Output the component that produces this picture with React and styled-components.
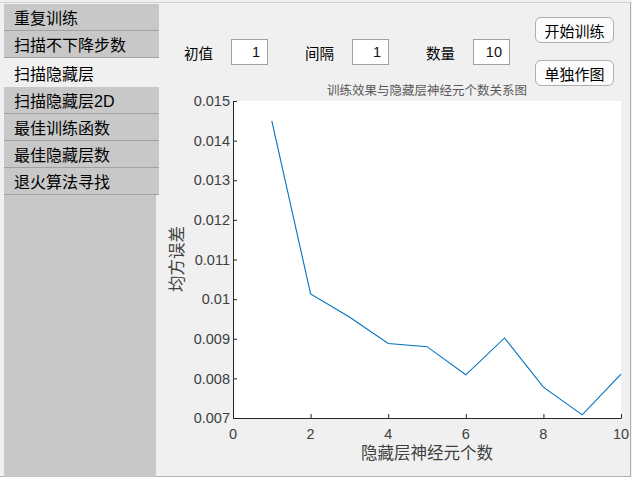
import React from "react";
import styled, { createGlobalStyle } from "styled-components";

const GlobalStyle = createGlobalStyle`
  html, body {
    margin: 0;
    padding: 0;
    background: #f0f0f0;
  }
  * {
    box-sizing: border-box;
  }
`;

const tabs = [
  "重复训练",
  "扫描不下降步数",
  "扫描隐藏层",
  "扫描隐藏层2D",
  "最佳训练函数",
  "最佳隐藏层数",
  "退火算法寻找",
];

const fields = [
  { label: "初值", value: "1" },
  { label: "间隔", value: "1" },
  { label: "数量", value: "10" },
];

const data = [0.0145, 0.01013, 0.00955, 0.00888, 0.0088, 0.00809, 0.00902, 0.00778, 0.00708, 0.00811];

// plot box inside the chart svg
const PL = 74;
const PR = 462;
const PT = 20;
const PB = 337;

const px = (x) => PL + (x / 10) * (PR - PL);
const py = (v) => PT + ((0.015 - v) / 0.008) * (PB - PT);

const yTicks = ["0.015", "0.014", "0.013", "0.012", "0.011", "0.01", "0.009", "0.008", "0.007"];
const xTicks = [0, 2, 4, 6, 8, 10];

const App = () => {
  const points = data.map((v, i) => `${px(i + 1)},${py(v)}`).join(" ");

  return (
    <>
      <GlobalStyle />
      <Window>
        <Frame>
          <Sidebar>
            {tabs.map((t, i) => (
              <Tab key={t} active={i === 2}>
                {t}
              </Tab>
            ))}
            <SidebarFill />
          </Sidebar>
          <Content>
            <Header>
              <Controls>
                {fields.map((f) => (
                  <Field key={f.label}>
                    <Label>{f.label}</Label>
                    <NumberBox>{f.value}</NumberBox>
                  </Field>
                ))}
              </Controls>
              <Buttons>
                <Button>开始训练</Button>
                <Button>单独作图</Button>
              </Buttons>
            </Header>
            <Chart width="471" height="396" viewBox="0 0 471 396">
              <rect x={PL} y={PT} width={PR - PL} height={PB - PT} fill="#ffffff" />
              <ChartTitle x="268" y="13.5" textAnchor="middle">
                训练效果与隐藏层神经元个数关系图
              </ChartTitle>
              <polyline points={points} fill="none" stroke="#0072bd" strokeWidth="1.1" />
              <line x1={PL + 0.5} y1={PT} x2={PL + 0.5} y2={PB} stroke="#262626" strokeWidth="1" />
              <line x1={PL} y1={PB + 0.5} x2={PR + 0.5} y2={PB + 0.5} stroke="#262626" strokeWidth="1" />
              {yTicks.map((t, i) => {
                const y = PT + (i * (PB - PT)) / 8;
                return (
                  <g key={t}>
                    <line x1={PL} y1={y + 0.5} x2={PL + 4} y2={y + 0.5} stroke="#262626" />
                    <TickText x={PL - 3} y={y} dy="0.36em" textAnchor="end">
                      {t}
                    </TickText>
                  </g>
                );
              })}
              {xTicks.map((t) => {
                const x = px(t);
                return (
                  <g key={t}>
                    <line x1={x + 0.5} y1={PB} x2={x + 0.5} y2={PB - 4} stroke="#262626" />
                    <TickText x={x} y="353" dy="0.36em" textAnchor="middle">
                      {t}
                    </TickText>
                  </g>
                );
              })}
              <AxisLabel x="268" y="372" dy="0.36em" textAnchor="middle">
                隐藏层神经元个数
              </AxisLabel>
              <AxisLabel
                x="18"
                y="178"
                dy="0.36em"
                textAnchor="middle"
                transform="rotate(-90 18 178)"
              >
                均方误差
              </AxisLabel>
            </Chart>
          </Content>
        </Frame>
      </Window>
    </>
  );
};

const Window = styled.div`
  width: 632px;
  height: 477px;
  background: #f0f0f0;
  padding-top: 2px;
  overflow: hidden;
  font-family: "Noto Sans CJK SC", "Liberation Sans", sans-serif;
`;

const Frame = styled.div`
  width: 631px;
  height: 475px;
  display: flex;
  padding: 1px 0 0 4px;
  border-top: 1px solid #d2d2d2;
  border-right: 1px solid #b0b0b0;
  border-bottom: 1px solid #b0b0b0;
`;

const Sidebar = styled.div`
  width: 155px;
  display: flex;
  flex-direction: column;
  margin-bottom: -1px;
`;

const Tab = styled.div`
  height: ${(p) => (p.active ? "29px" : "27px")};
  width: ${(p) => (p.active ? "156px" : "155px")};
  padding-left: 10px;
  display: flex;
  align-items: center;
  font-size: 16px;
  color: #000000;
  background: ${(p) => (p.active ? "#f0f0f0" : "#c8c8c8")};
  border-bottom: ${(p) => (p.active ? "none" : "1px solid #a2a2a2")};
  white-space: nowrap;
  font-family: "Liberation Sans", "Noto Sans CJK SC", sans-serif;
`;

const SidebarFill = styled.div`
  width: 152px;
  flex: 1;
  background: #c8c8c8;
`;

const Content = styled.div`
  flex: 1;
  display: flex;
  flex-direction: column;
`;

const Header = styled.div`
  height: 77px;
  display: flex;
  justify-content: space-between;
  align-items: flex-start;
  padding: 0 16px 0 25px;
`;

const Controls = styled.div`
  display: flex;
  gap: 37px;
  margin-top: 35px;
`;

const Field = styled.div`
  display: flex;
  align-items: center;
  gap: 18px;
`;

const Label = styled.span`
  font-size: 14.5px;
  color: #000000;
`;

const NumberBox = styled.div`
  width: 37px;
  height: 26px;
  background: #ffffff;
  border: 1px solid #a0a0a0;
  display: flex;
  align-items: center;
  justify-content: flex-end;
  padding-right: 7px;
  font-family: "Liberation Sans", sans-serif;
  font-size: 14.5px;
  color: #111111;
`;

const Buttons = styled.div`
  display: flex;
  flex-direction: column;
  gap: 17px;
  margin-top: 13px;
  position: relative;
  z-index: 1;
`;

const Button = styled.button`
  width: 79px;
  height: 26px;
  padding: 0;
  border: 1px solid #adadad;
  border-radius: 6px;
  background: #fcfcfc;
  font-family: "Noto Sans CJK SC", sans-serif;
  font-size: 15px;
  color: #000000;
  display: flex;
  align-items: center;
  justify-content: center;
`;

const Chart = styled.svg`
  display: block;
  overflow: visible;
`;

const ChartTitle = styled.text`
  font-family: "Noto Sans CJK SC", sans-serif;
  font-size: 12.5px;
  fill: #595959;
`;

const TickText = styled.text`
  font-family: "Liberation Sans", sans-serif;
  font-size: 14.5px;
  fill: #404040;
`;

const AxisLabel = styled.text`
  font-family: "Noto Sans CJK SC", sans-serif;
  font-size: 16.5px;
  fill: #404040;
`;

export default App;
